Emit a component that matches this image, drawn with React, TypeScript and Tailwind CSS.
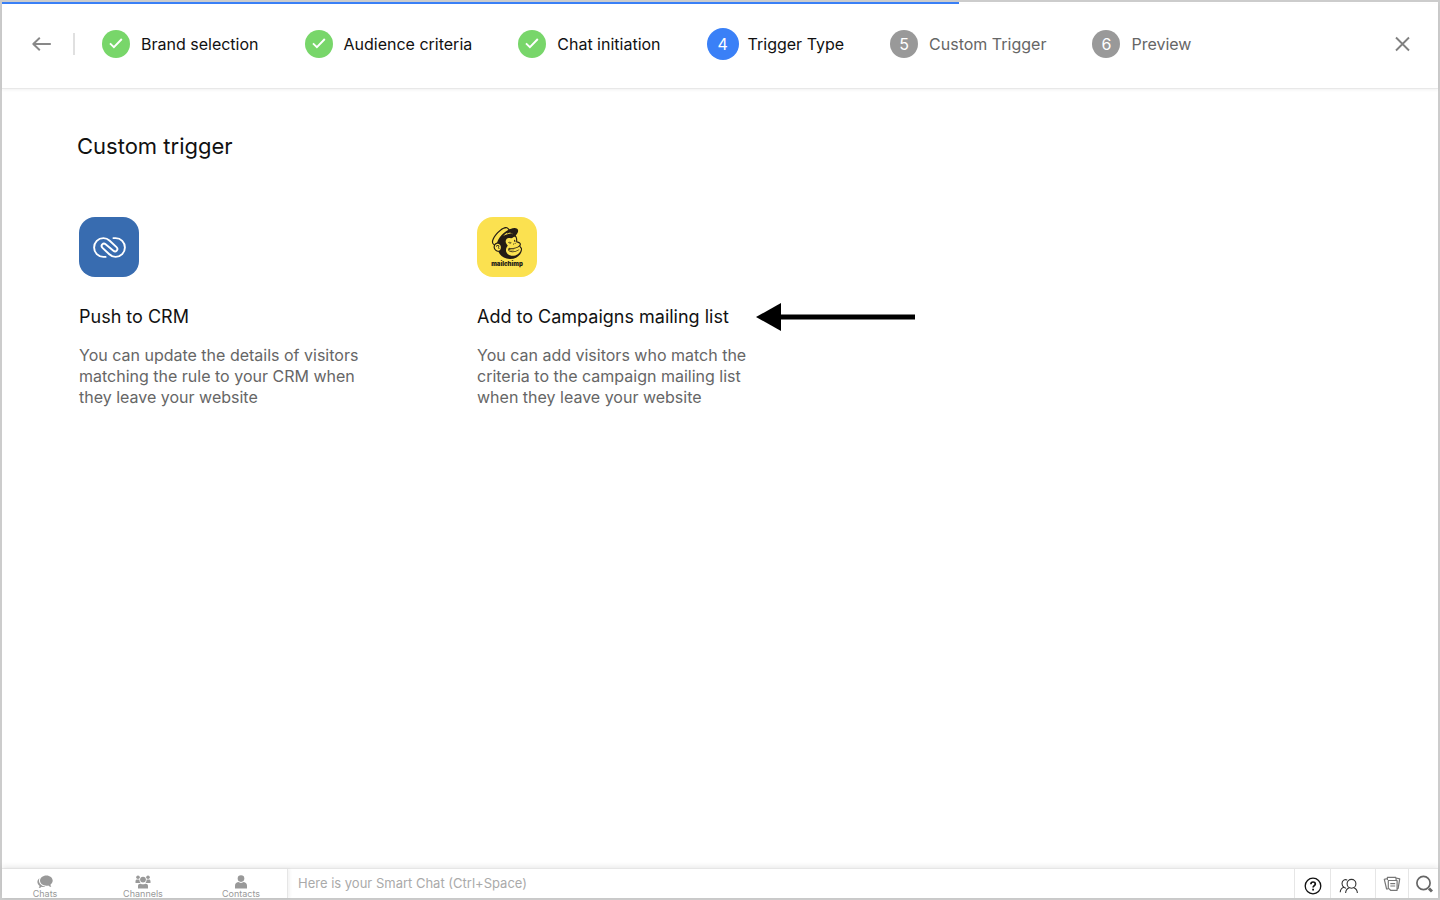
import type { ReactNode } from "react";
import { SiMailchimp } from "react-icons/si";

type StepState = "done" | "active" | "upcoming";

type Step = {
  label: string;
  state: StepState;
};

const steps: Step[] = [
  { label: "Brand selection", state: "done" },
  { label: "Audience criteria", state: "done" },
  { label: "Chat initiation", state: "done" },
  { label: "Trigger Type", state: "active" },
  { label: "Custom Trigger", state: "upcoming" },
  { label: "Preview", state: "upcoming" },
];

const badgeStyles: Record<StepState, string> = {
  done: "size-7 bg-[#78d66a]",
  active: "-my-0.5 -mr-0.5 size-8 bg-[#3a80f7]",
  upcoming: "size-7 bg-[#999999]",
};

function CheckIcon() {
  return (
    <svg viewBox="0 0 14 12" className="h-3 w-3.5" fill="none" stroke="currentColor" strokeWidth="1.9" aria-hidden="true">
      <path d="M1 5.4 4.9 9.2 12.8 1" />
    </svg>
  );
}

function StepItem({ step, number }: { step: Step; number: number }) {
  return (
    <li className="flex items-center gap-[11px]" aria-current={step.state === "active" ? "step" : undefined}>
      <span className={`flex shrink-0 items-center justify-center rounded-full text-base text-white ${badgeStyles[step.state]}`}>
        {step.state === "done" ? <CheckIcon /> : number}
      </span>
      <span className={`whitespace-nowrap text-base ${step.state === "upcoming" ? "text-[#666666]" : "text-[#111111]"}`}>
        {step.label}
      </span>
    </li>
  );
}

function CrmIcon() {
  return (
    <span className="flex size-[60px] items-center justify-center rounded-2xl bg-[#386cb0] text-white">
      <svg viewBox="0 0 33 21" className="h-[21px] w-[33px]" fill="none" stroke="currentColor" strokeWidth="1.9" strokeLinecap="round" strokeLinejoin="round" aria-hidden="true">
        <path d="M12.6 19.900H10.400C5.100 19.900 1.100 15.700 1.100 10.500S5.100 1.100 10.400 1.100c2.500 0 4.500.9 6.300 2.600l6.800 6.400c2.400 2.300-.7 5.700-3.100 3.600l-7.800-6.400C10.200 5.300 7.100 8.600 9.500 10.900l6.800 6.400c1.800 1.700 3.800 2.600 6.300 2.600 5.300 0 9.300-4.200 9.300-9.400S27.900 1.100 22.600 1.100h-2.200" />
      </svg>
    </span>
  );
}

function MailchimpIcon() {
  return (
    <span className="flex size-[60px] flex-col items-center rounded-2xl bg-[#fbe150] pt-[10px] text-[#241c15]">
      <SiMailchimp className="size-8" aria-hidden="true" />
      <span className="text-[6px] leading-[10px] font-black">mailchimp</span>
    </span>
  );
}

type TriggerCardProps = {
  icon: ReactNode;
  title: string;
  description: string;
  pointer?: boolean;
};

function TriggerCard({ icon, title, description, pointer }: TriggerCardProps) {
  return (
    <article className="w-[398px]">
      {icon}
      <div className="mt-[26px] flex items-center gap-[27px]">
        <h2 className="whitespace-nowrap text-lg leading-7 text-[#111111]">{title}</h2>
        {pointer && (
          <svg viewBox="0 0 159 28" className="h-7 w-[159px] shrink-0" aria-hidden="true">
            <path d="M0 14 25 0v28z" />
            <path d="M24 11.500h135v5H24z" />
          </svg>
        )}
      </div>
      <p className="mt-[14px] w-[290px] text-base leading-[21px] text-[#666666]">{description}</p>
    </article>
  );
}

function ChatsIcon() {
  return (
    <svg viewBox="0 0 16 14" className="h-3.5 w-4" fill="currentColor" aria-hidden="true">
      <path d="M9.400.4C5.800.4 3 2.700 3 5.600s2.800 5.200 6.400 5.200c.7 0 1.400-.1 2-.3.600.900 1.700 1.400 2.900 1.400-.6-.6-.8-1.500-.8-2.300 1.300-1 2.200-2.400 2.200-4C15.700 2.700 13 .4 9.400.4z" />
      <path d="M2.500 3.300C1.200 4.200.4 5.500.4 7c0 1.500.8 2.900 2.100 3.800 0 .8-.2 1.500-.8 2.100 1.200 0 2.200-.4 2.900-1.200 1.300.3 2.600.3 3.800 0C4.700 11.200 2 8.900 2 5.600c0-.8.200-1.600.5-2.300z" />
    </svg>
  );
}

function ChannelsIcon() {
  return (
    <svg viewBox="0 0 16 14" className="h-3.5 w-4" fill="currentColor" aria-hidden="true">
      <circle cx="3" cy="2.200" r="1.800" />
      <circle cx="13" cy="2.200" r="1.800" />
      <circle cx="8" cy="4.600" r="2.900" />
      <path d="M.5 7.900V6.200c0-1 .7-1.600 1.600-1.600h1.800c.2 0 .4 0 .5.100 0 1.200.4 2.300 1.100 3.200zM15.500 7.900V6.200c0-1-.7-1.600-1.600-1.600h-1.800c-.2 0-.4 0-.5.100 0 1.200-.4 2.300-1.100 3.200zM3 13.500v-2.600c0-1.300 1-2.200 2.300-2.200h.5c1.300.8 3.100.8 4.400 0h.5c1.300 0 2.300.9 2.300 2.200v2.600z" />
    </svg>
  );
}

function ContactsIcon() {
  return (
    <svg viewBox="0 0 14 14" className="size-3.5" fill="currentColor" aria-hidden="true">
      <circle cx="7" cy="3.600" r="3.300" />
      <path d="M1 13.500v-2.700C1 8.800 2.300 7.400 4.200 7.100c1.700 1.100 3.900 1.100 5.600 0 1.900.3 3.200 1.700 3.200 3.700v2.700z" />
    </svg>
  );
}

const footerTabs = [
  { label: "Chats", icon: <ChatsIcon />, width: "w-[86px]" },
  { label: "Channels", icon: <ChannelsIcon />, width: "w-[110px]" },
  { label: "Contacts", icon: <ContactsIcon />, width: "w-[86px]" },
];

function Footer() {
  return (
    <footer className="flex h-[30px] border-t border-[#e6e6e6] bg-white shadow-[0_-2px_5px_rgba(0,0,0,0.08)]">
      <nav className="flex w-[286px] shrink-0 border-r border-[#e6e6e6] shadow-[2px_0_3px_rgba(0,0,0,0.05)]" aria-label="Messenger">
        {footerTabs.map((tab) => (
          <button key={tab.label} type="button" className={`flex flex-col items-center pt-1.5 text-[#999999] ${tab.width}`}>
            {tab.icon}
            <span className="text-[9px] leading-[9px]">{tab.label}</span>
          </button>
        ))}
      </nav>
      <input
        type="text"
        aria-label="Smart Chat"
        placeholder="Here is your Smart Chat (Ctrl+Space)"
        className="min-w-0 flex-1 px-2.5 text-[13px] outline-none placeholder:text-[#aaaaaa]"
      />
      <button type="button" aria-label="Help" className="flex w-9 items-center justify-center border-l border-[#e6e6e6] pt-1 text-[#111111]">
        <svg viewBox="0 0 18 18" className="size-[18px]" fill="none" stroke="currentColor" strokeWidth="1.300" aria-hidden="true">
          <circle cx="9" cy="9" r="7.800" />
          <path d="M6.900 7.200C6.900 4.200 11.300 4.400 11.300 7c0 1.600-2.200 1.700-2.200 3.500" strokeWidth="1.700" />
          <path d="M9.100 11.800v1.700" strokeWidth="1.800" />
        </svg>
      </button>
      <button type="button" aria-label="Visitors" className="flex w-[45px] items-center border-l border-[#e6e6e6] pt-1 pl-2 text-[#333333]">
        <svg viewBox="0 0 20 16" className="h-4 w-5" fill="none" stroke="currentColor" strokeWidth="1.100" aria-hidden="true">
          <circle cx="12.500" cy="5.800" r="4.400" />
          <path d="M6.600 15c.2-2.600 1.500-4.400 3.700-5.200M14.700 9.800c2.200.8 3.500 2.600 3.700 5.200M8.200 2.100C6 .7 3 2.400 3 5.500c0 1.700.8 3 1.900 3.800C2.600 10 1.400 11.800 1.200 14.200M4.900 9.300c.6.500 1.300.7 2.100.8" />
        </svg>
      </button>
      <button type="button" aria-label="Notes" className="flex w-[33px] items-center justify-center border-l border-[#e6e6e6] text-[#777777]">
        <svg viewBox="0 0 18 16" className="h-4 w-[18px]" fill="none" stroke="currentColor" strokeWidth="1.200" strokeLinejoin="round" aria-hidden="true">
          <path d="M5.300 4.500h8.800v9.800H7.600l-2.300-2.200zM7.300 7.600h4.900M7.300 10h4.900" />
          <path d="M5.100 12.800 3.600 13 1.300 3.300l3-.8M4.400 4V1.300l8.400.1.400 2.700M13.200 2l3.500.9-1.500 9.300-1 .8" />
        </svg>
      </button>
      <button type="button" aria-label="Search" className="flex w-[30px] items-center justify-center border-l border-[#e6e6e6] text-[#666666]">
        <svg viewBox="0 0 18 18" className="size-[18px]" fill="none" stroke="currentColor" strokeWidth="1.700" aria-hidden="true">
          <circle cx="8.500" cy="8" r="6.600" />
          <path d="m14 13.500 3 3" strokeWidth="3" />
        </svg>
      </button>
    </footer>
  );
}

export default function App() {
  return (
    <div className="flex min-h-screen flex-col border-2 border-[#cccccc] bg-white font-['Inter',sans-serif]">
      <div className="h-0.5 w-2/3 bg-[#3a80f7]" />
      <header className="flex h-[85px] items-center border-b border-[#e8e8e8] pr-7 pb-1 pl-[30px] shadow-[0_1px_3px_rgba(0,0,0,0.06)]">
        <button type="button" aria-label="Back" className="text-[#888888]">
          <svg viewBox="0 0 20 16" className="h-4 w-5" fill="none" stroke="currentColor" strokeWidth="1.900" strokeLinejoin="round" aria-hidden="true">
            <path d="M18.800 8H1.500M7.800 1.700 1.300 8l6.500 6.300" />
          </svg>
        </button>
        <span className="ml-[21px] h-[22px] w-0.5 bg-[#e0e0e0]" />
        <ol className="ml-[27px] flex items-center gap-[46px]">
          {steps.map((step, index) => (
            <StepItem key={step.label} step={step} number={index + 1} />
          ))}
        </ol>
        <button type="button" aria-label="Close" className="ml-auto text-[#808080]">
          <svg viewBox="0 0 16 16" className="size-4" fill="none" stroke="currentColor" strokeWidth="1.900" aria-hidden="true">
            <path d="m2 1.500 13 13M15 1.500l-13 13" />
          </svg>
        </button>
      </header>
      <main className="flex-1 px-[75px] pt-[41px]">
        <h1 className="text-[22px] leading-8 text-[#111111]">Custom trigger</h1>
        <div className="mt-[55px] flex flex-wrap pl-0.5">
          <TriggerCard
            icon={<CrmIcon />}
            title="Push to CRM"
            description="You can update the details of visitors matching the rule to your CRM when they leave your website"
          />
          <TriggerCard
            icon={<MailchimpIcon />}
            title="Add to Campaigns mailing list"
            description="You can add visitors who match the criteria to the campaign mailing list when they leave your website"
            pointer
          />
        </div>
      </main>
      <Footer />
    </div>
  );
}
